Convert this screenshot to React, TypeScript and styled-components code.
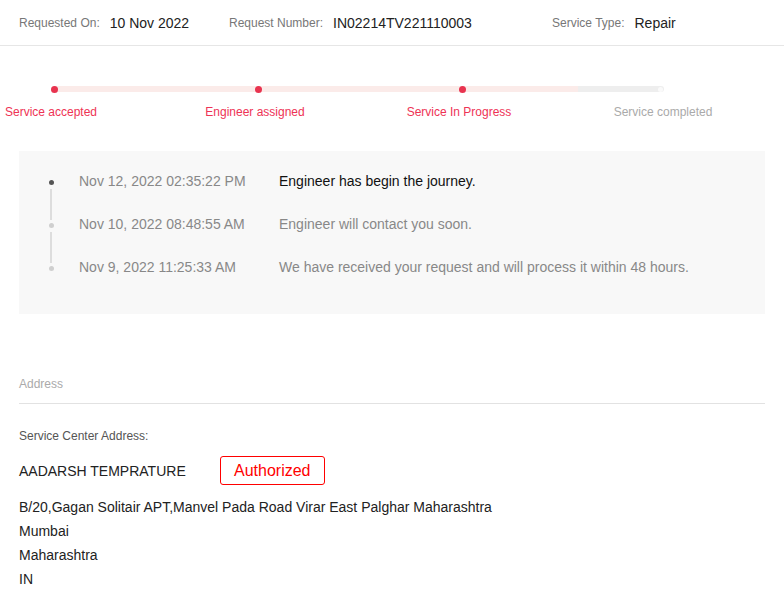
import React from "react"
import styled, { createGlobalStyle } from "styled-components"

const GlobalStyle = createGlobalStyle`
  html, body {
    margin: 0;
    padding: 0;
    background: #fff;
    font-family: "Liberation Sans", Arial, sans-serif;
  }
`

const Page = styled.div`
  width: 784px;
`

const Header = styled.header`
  height: 45px;
  display: flex;
  align-items: center;
  padding: 0 19px;
  border-bottom: 1px solid #e6e6e6;
`

const HeaderItem = styled.div<{ $width?: number }>`
  display: flex;
  align-items: center;
  width: ${(p) => (p.$width ? `${p.$width}px` : "auto")};
`

const HeaderLabel = styled.span`
  font-size: 12px;
  color: #777;
  margin-right: 10px;
`

const HeaderValue = styled.span`
  font-size: 14px;
  color: #222;
`

const Progress = styled.section`
  padding-top: 40px;
`

const Track = styled.div`
  margin-left: 51px;
  width: 613px;
  height: 6px;
  border-radius: 3px;
  background: linear-gradient(to right, #fbebe9 0%, #fbebe9 86%, #eeeeee 86%, #eeeeee 100%);
  display: flex;
  align-items: center;
  justify-content: space-between;
`

const DoneDots = styled.div`
  display: flex;
  align-items: center;
  gap: 197px;
`

const Dot = styled.span<{ $done: boolean }>`
  width: ${(p) => (p.$done ? 7 : 5)}px;
  height: ${(p) => (p.$done ? 7 : 5)}px;
  margin: 0 ${(p) => (p.$done ? 0 : 1)}px;
  border-radius: 50%;
  background: ${(p) => (p.$done ? "#e8334f" : "#fafafa")};
`

const Labels = styled.div`
  display: flex;
  margin-top: 12px;
  margin-left: -51px;
`

const StepLabel = styled.div<{ $done: boolean }>`
  width: 204px;
  text-align: center;
  font-size: 12px;
  line-height: 16px;
  color: ${(p) => (p.$done ? "#ee3355" : "#aaa")};
`

const Content = styled.div`
  padding: 0 19px;
`

const Timeline = styled.div`
  margin-top: 31px;
  background: #f8f8f8;
  padding: 20px 26px 14px;
`

const Row = styled.div`
  display: flex;
  height: 43px;
`

const Marker = styled.div`
  width: 12px;
  display: flex;
  flex-direction: column;
  align-items: center;
  margin-right: 22px;
`

const Segment = styled.span<{ $hidden: boolean; $grow?: boolean }>`
  width: 2px;
  height: 6px;
  flex: ${(p) => (p.$grow ? 1 : "none")};
  background: ${(p) => (p.$hidden ? "transparent" : "#dddddd")};
`

const TimeDot = styled.span<{ $active: boolean }>`
  width: 5px;
  height: 5px;
  border-radius: 50%;
  margin: 3px 0 4px;
  background: ${(p) => (p.$active ? "#555" : "#cfcfcf")};
`

const Time = styled.div`
  width: 200px;
  font-size: 14px;
  line-height: 20px;
  color: #888;
`

const Message = styled.div<{ $active: boolean }>`
  font-size: 14px;
  line-height: 20px;
  color: ${(p) => (p.$active ? "#111" : "#888")};
`

const SectionTitle = styled.div`
  margin-top: 62px;
  padding-bottom: 11px;
  border-bottom: 1px solid #e2e2e2;
  font-size: 12px;
  line-height: 16px;
  color: #aaa;
`

const SubTitle = styled.div`
  margin-top: 24px;
  font-size: 12px;
  line-height: 16px;
  color: #555;
`

const NameRow = styled.div`
  margin-top: 12px;
  display: flex;
  align-items: center;
`

const Name = styled.div`
  width: 201px;
  font-size: 14px;
  color: #222;
`

const Badge = styled.span`
  box-sizing: border-box;
  height: 29px;
  padding: 0 13px;
  display: inline-flex;
  align-items: center;
  border: 1px solid #ff0000;
  border-radius: 3px;
  font-size: 16px;
  color: #ff0000;
`

const AddressLines = styled.div`
  margin-top: 10px;
`

const Line = styled.div`
  font-size: 14px;
  line-height: 24px;
  color: #222;
`

const steps = [
  { label: "Service accepted", done: true },
  { label: "Engineer assigned", done: true },
  { label: "Service In Progress", done: true },
  { label: "Service completed", done: false },
]

const events = [
  { time: "Nov 12, 2022 02:35:22 PM", text: "Engineer has begin the journey." },
  { time: "Nov 10, 2022 08:48:55 AM", text: "Engineer will contact you soon." },
  { time: "Nov 9, 2022 11:25:33 AM", text: "We have received your request and will process it within 48 hours." },
]

const address = [
  "B/20,Gagan Solitair APT,Manvel Pada Road Virar East Palghar Maharashtra",
  "Mumbai",
  "Maharashtra",
  "IN",
]

export default function App() {
  const done = steps.filter((s) => s.done)
  const pending = steps.filter((s) => !s.done)
  return (
    <Page>
      <GlobalStyle />
      <Header>
        <HeaderItem $width={210}>
          <HeaderLabel>Requested On:</HeaderLabel>
          <HeaderValue>10 Nov 2022</HeaderValue>
        </HeaderItem>
        <HeaderItem $width={323}>
          <HeaderLabel>Request Number:</HeaderLabel>
          <HeaderValue>IN02214TV221110003</HeaderValue>
        </HeaderItem>
        <HeaderItem>
          <HeaderLabel>Service Type:</HeaderLabel>
          <HeaderValue>Repair</HeaderValue>
        </HeaderItem>
      </Header>

      <Progress>
        <Track>
          <DoneDots>
            {done.map((s) => (
              <Dot key={s.label} $done />
            ))}
          </DoneDots>
          {pending.map((s) => (
            <Dot key={s.label} $done={false} />
          ))}
        </Track>
        <Labels>
          {steps.map((s) => (
            <StepLabel key={s.label} $done={s.done}>{s.label}</StepLabel>
          ))}
        </Labels>
      </Progress>

      <Content>
        <Timeline>
          {events.map((e, i) => (
            <Row key={e.time}>
              <Marker>
                <Segment $hidden={i === 0} />
                <TimeDot $active={i === 0} />
                <Segment $hidden={i === events.length - 1} $grow />
              </Marker>
              <Time>{e.time}</Time>
              <Message $active={i === 0}>{e.text}</Message>
            </Row>
          ))}
        </Timeline>

        <SectionTitle>Address</SectionTitle>
        <SubTitle>Service Center Address:</SubTitle>
        <NameRow>
          <Name>AADARSH TEMPRATURE</Name>
          <Badge>Authorized</Badge>
        </NameRow>
        <AddressLines>
          {address.map((l) => (
            <Line key={l}>{l}</Line>
          ))}
        </AddressLines>
      </Content>
    </Page>
  )
}
